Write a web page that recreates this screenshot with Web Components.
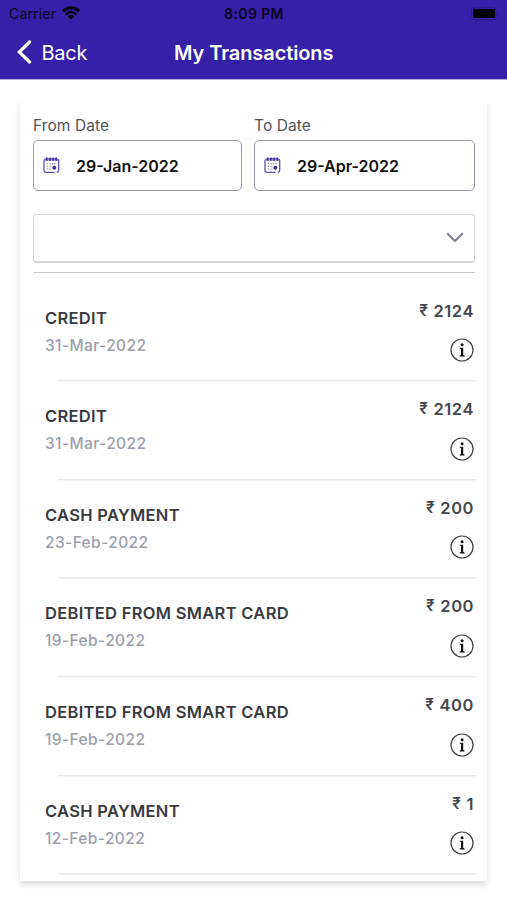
<!DOCTYPE html>
<html lang="en">
<head>
<meta charset="utf-8">
<title>My Transactions</title>
<style>
body { margin: 0; background: #fff; font-family: Inter, "Liberation Sans", sans-serif; }
</style>
</head>
<body>
<transactions-screen></transactions-screen>
<script>
const define = (name, html, setup) => customElements.define(name, class extends HTMLElement {
  connectedCallback() {
    if (this.shadowRoot) return;
    const template = document.createElement('template');
    template.innerHTML = html;
    this.attachShadow({ mode: 'open' }).append(template.content.cloneNode(true));
    if (setup) setup(this, this.shadowRoot);
  }
});

define('status-bar', `
<style>
:host { display: grid; grid-template-columns: 1fr auto 1fr; align-items: center; height: 27px; padding: 0 8px 0 9px; color: #08051f; font-size: 14px; line-height: 18px; }
.left { display: flex; align-items: center; gap: 6px; }
.carrier { letter-spacing: .17px; }
.time { font-weight: 600; letter-spacing: .4px; }
.battery { justify-self: end; }
svg { display: block; }
.left svg { margin-top: -2px; }
</style>
<div class="left"><span class="carrier">Carrier</span>
<svg width="18" height="14" viewBox="0 0 18 14" fill="none" stroke="#05030f" stroke-width="2.8"><path d="M.9 5.2C5.5.6 12.500.6 17.100 5.200M3.700 8.400C6.800 5.300 11.200 5.300 14.300 8.400"/><path d="M9 13.500 5.800 10.400Q9 7.700 12.200 10.400Z" fill="#05030f" stroke="none"/></svg></div>
<span class="time">8:09 PM</span>
<svg class="battery" width="28" height="14" viewBox="0 0 28 14"><rect x=".5" y=".8" width="24.500" height="12" rx="3.500" fill="none" stroke="#2a1988"/><rect x="2" y="2.100" width="22" height="8.900" rx="1.800" fill="#000"/><path d="M26.200 4.700Q28 6.800 26.200 8.900Z" fill="#2a1988"/></svg>`);

define('nav-bar', `
<style>
:host { display: grid; grid-template-columns: 1fr auto 1fr; align-items: center; height: 51px; padding: 0 16px 0 16.500px; color: #fff; font-size: 20px; line-height: 26px; }
.back { display: flex; align-items: center; gap: 10px; letter-spacing: -.25px; }
.back svg { margin-top: -1px; }
.title { font-weight: 600; letter-spacing: -.1px; }
svg { display: block; }
</style>
<div class="back"><svg width="15" height="24" viewBox="0 0 15 24" fill="none" stroke="#fff" stroke-width="3.200" stroke-linecap="round"><path d="M12.600 2 2.300 12 12.600 22"/></svg><slot name="back"></slot></div>
<span class="title"><slot></slot></span>`);

define('date-field', `
<style>
:host { display: block; min-width: 0; }
label { display: block; height: 30px; line-height: 31px; font-size: 15.5px; color: #505359; letter-spacing: .1px; }
.box { display: flex; align-items: center; gap: 16.500px; box-sizing: border-box; height: 51px; padding-left: 8.500px; border: 1.500px solid #9497af; border-radius: 5px; font-size: 16px; font-weight: 600; color: #111; letter-spacing: 0; }
svg { display: block; flex: none; }
</style>
<label><slot name="label"></slot></label>
<div class="box"><svg width="17" height="17" viewBox="0 0 17 17" fill="none" stroke="#6550bb" stroke-width="1.300"><path d="M11.500 15.300H3.200Q1 15.300 1 13V4.200Q1 2 3.200 2H13.500Q15.700 2 15.700 4.200V12M15.700 12V13Q15.700 15.300 13.700 15.300"/><path d="M1.300 3H15.400" stroke="#9485d0"/><path d="M3.800.4V3.700M6.900.4V3.700M10 .4V3.700M13.100.4V3.700" stroke="#4430a5" stroke-width="1.600"/><path d="M3.800 6.700H13.500M3.800 9.300H9M3.800 12H9" stroke="#9b8fd1" stroke-width="1.200" stroke-dasharray="1.400 1.100"/><circle cx="11.300" cy="10.700" r="2" fill="#4430a5" stroke="none"/></svg><slot></slot></div>`);

define('select-box', `
<style>
:host { display: flex; align-items: center; justify-content: flex-end; box-sizing: border-box; height: 49px; padding-right: 10px; border: 1.500px solid #d5d8da; border-bottom-width: 2px; border-radius: 3px; }
svg { display: block; }
</style>
<svg width="18" height="11" viewBox="0 0 18 11" fill="none" stroke="#7c8290" stroke-width="2"><path d="M1.200 1.300 9 9 16.800 1.300"/></svg>`);

define('info-icon', `
<style>:host { display: block; width: 24px; height: 24px; } svg { display: block; }</style>
<svg width="24" height="24" viewBox="0 0 24 24"><circle cx="12" cy="12" r="11" fill="none" stroke="#414141" stroke-width="1.200"/><circle cx="12.100" cy="6.700" r="1.500" fill="#111"/><path d="M9.700 9.700H13.200V17.100L14.500 17.600V18.400H9.700V17.600L11 17.100V11L9.700 10.500Z" fill="#111"/></svg>`);

define('transaction-row', `
<style>
:host { display: flex; justify-content: space-between; position: relative; box-sizing: border-box; height: 98.600px; padding: 16px 1px 0 12px; }
:host::after { content: ""; position: absolute; left: 25px; right: -1px; bottom: 0; height: 2px; background: linear-gradient(#e9eaea 50%, #f5f5f5 50%); }
.info { padding-top: 7px; }
.name { font-size: 16.500px; line-height: 22px; font-weight: 600; color: #383b3f; letter-spacing: .3px; }
.date { margin-top: 6px; font-size: 15.500px; line-height: 22px; font-weight: 550; color: #9ca0aa; letter-spacing: .4px; }
.side { display: flex; flex-direction: column; align-items: flex-end; gap: 16.500px; }
.amount { display: flex; gap: 5px; font-size: 16.500px; line-height: 22px; font-weight: 600; color: #45474d; letter-spacing: .55px; }
.rupee { font-size: 15.500px; }
</style>
<div class="info"><div class="name"></div><div class="date"></div></div>
<div class="side"><div class="amount"><span class="rupee">₹</span><span class="value"></span></div><info-icon></info-icon></div>`,
(host, root) => {
  root.querySelector('.name').textContent = host.getAttribute('name');
  root.querySelector('.date').textContent = host.getAttribute('date');
  root.querySelector('.value').textContent = host.getAttribute('amount');
});

define('transactions-screen', `
<style>
:host { display: block; height: 900px; overflow: hidden; }
header { background: #3620a8; height: 79px; box-shadow: 0 1px 0 #b5addf; }
main { box-sizing: border-box; margin: 21px 20px 0; height: 781px; padding: 10px 12px 0 13px; background: #fff; box-shadow: 0 4px 6px rgba(0,0,0,.13); }
.dates { display: grid; grid-template-columns: 209px 221px; gap: 12px; }
select-box { margin-top: 22.500px; }
.list { margin-top: 9.500px; border-top: 1px solid #c9cacb; padding-top: 10.700px; }
</style>
<header><status-bar></status-bar><nav-bar><span slot="back">Back</span>My Transactions</nav-bar></header>
<main>
<div class="dates"><date-field><span slot="label">From Date</span>29-Jan-2022</date-field><date-field><span slot="label">To Date</span>29-Apr-2022</date-field></div>
<select-box></select-box>
<div class="list">
<transaction-row name="CREDIT" date="31-Mar-2022" amount="2124"></transaction-row>
<transaction-row name="CREDIT" date="31-Mar-2022" amount="2124"></transaction-row>
<transaction-row name="CASH PAYMENT" date="23-Feb-2022" amount="200"></transaction-row>
<transaction-row name="DEBITED FROM SMART CARD" date="19-Feb-2022" amount="200"></transaction-row>
<transaction-row name="DEBITED FROM SMART CARD" date="19-Feb-2022" amount="400"></transaction-row>
<transaction-row name="CASH PAYMENT" date="12-Feb-2022" amount="1"></transaction-row>
</div>
</main>`);
</script>
</body>
</html>
